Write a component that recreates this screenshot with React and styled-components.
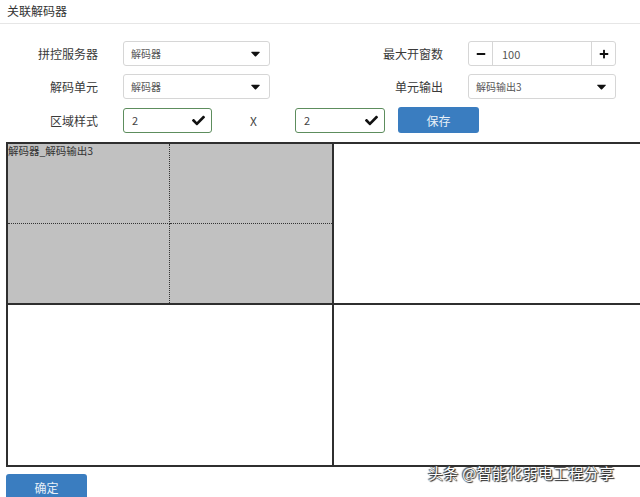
import React from 'react'
import styled, { createGlobalStyle } from 'styled-components'
import { FaCaretDown, FaCheck, FaMinus, FaPlus } from 'react-icons/fa'

const Global = createGlobalStyle`
  html, body {
    margin: 0;
    padding: 0;
    background: #fff;
    overflow: hidden;
  }
  body {
    font-family: "Noto Sans CJK SC", "Liberation Sans", sans-serif;
    color: #333;
  }
`

const Page = styled.div`
  position: relative;
  width: 640px;
  height: 497px;
  overflow: hidden;
`

const Header = styled.div`
  height: 24px;
  box-sizing: border-box;
  padding: 3px 0 0 7px;
  font-size: 12px;
  line-height: 16px;
  border-bottom: 1px solid #e6e6e6;
`

const Form = styled.div`
  display: grid;
  grid-template-columns: 98px 147px 148px 148px;
  grid-auto-rows: auto;
  column-gap: 25px;
  row-gap: 8px;
  padding-top: 17px;
`

const Label = styled.div`
  display: flex;
  align-items: center;
  justify-content: flex-end;
  font-size: 12px;
  color: #3a3a3a;
`

const Select = styled.div`
  height: 25px;
  box-sizing: border-box;
  border: 1px solid #d6d6d6;
  border-radius: 3px;
  display: flex;
  align-items: center;
  justify-content: space-between;
  padding: 0 6px 0 7px;
  font-size: 10px;
  color: #555;
  svg {
    font-size: 15px;
    color: #111;
  }
`

const Spinner = styled.div`
  height: 25px;
  box-sizing: border-box;
  border: 1px solid #d6d6d6;
  border-radius: 3px;
  display: flex;
  align-items: stretch;
  font-size: 11px;
  color: #555;
`

const SpinButton = styled.div`
  width: 23px;
  display: flex;
  align-items: center;
  justify-content: center;
  border-${p => (p.$side === 'left' ? 'right' : 'left')}: 1px solid #d6d6d6;
  svg {
    font-size: 10px;
    color: #111;
  }
`

const SpinValue = styled.div`
  flex: 1;
  display: flex;
  align-items: center;
  padding-left: 9px;
`

const StyleRow = styled.div`
  grid-column: 2 / 5;
  display: flex;
  align-items: center;
`

const CheckInput = styled.div`
  width: ${p => p.$w}px;
  height: 25px;
  box-sizing: border-box;
  border: 1px solid #5d8d5d;
  border-radius: 3px;
  display: flex;
  align-items: center;
  justify-content: space-between;
  padding: 0 6px 0 8px;
  font-size: 11px;
  color: #444;
  svg {
    font-size: 13px;
    color: #111;
  }
`

const Times = styled.div`
  width: 83px;
  text-align: center;
  font-size: 12px;
  color: #444;
`

const Button = styled.div`
  width: 81px;
  height: 26px;
  border-radius: 3px;
  background: #3a7dc0;
  color: #e8f0f8;
  font-size: 12px;
  display: flex;
  align-items: center;
  justify-content: center;
  margin-left: ${p => p.$ml || 0}px;
`

const Wall = styled.div`
  margin: 9px 0 0 6px;
  width: 660px;
  box-sizing: border-box;
  padding: 2px 0 2px 2px;
  background: #2f2f2f;
  display: grid;
  grid-template-columns: 324px 1fr;
  grid-template-rows: 159px 160px;
  gap: 2px;
`

const Cell = styled.div`
  position: relative;
  background: ${p => (p.$active ? '#c1c1c1' : '#fff')};
  ${p =>
    p.$active &&
    `
    display: grid;
    grid-template-columns: 1fr 1fr;
    grid-template-rows: 1fr 1fr;
  `}
`

const SubWindow = styled.div`
  border-right: ${p => (p.$col === 0 ? '1px dotted #333' : 'none')};
  border-bottom: ${p => (p.$row === 0 ? '1px dotted #333' : 'none')};
`

const CellName = styled.div`
  position: absolute;
  left: 0;
  top: 1px;
  font-size: 10.5px;
  line-height: 12px;
  color: #333;
`

const Footer = styled.div`
  padding: 7px 0 0 6px;
`

const Watermark = styled.div`
  position: absolute;
  left: 428px;
  top: 463px;
  font-size: 15px;
  line-height: 20px;
  color: #fff;
  letter-spacing: 0.3px;
  text-shadow: 0 0 1px #222, 1px 1px 1px #222, -1px -1px 1px #444;
`

export default function App() {
  return (
    <Page>
      <Global />
      <Header>关联解码器</Header>
      <Form>
        <Label>拼控服务器</Label>
        <Select>
          解码器
          <FaCaretDown />
        </Select>
        <Label>最大开窗数</Label>
        <Spinner>
          <SpinButton $side="left">
            <FaMinus />
          </SpinButton>
          <SpinValue>100</SpinValue>
          <SpinButton $side="right">
            <FaPlus />
          </SpinButton>
        </Spinner>

        <Label>解码单元</Label>
        <Select>
          解码器
          <FaCaretDown />
        </Select>
        <Label>单元输出</Label>
        <Select>
          解码输出3
          <FaCaretDown />
        </Select>

        <Label>区域样式</Label>
        <StyleRow>
          <CheckInput $w={89}>
            2
            <FaCheck />
          </CheckInput>
          <Times>X</Times>
          <CheckInput $w={90}>
            2
            <FaCheck />
          </CheckInput>
          <Button $ml={13}>保存</Button>
        </StyleRow>
      </Form>
      <Wall>
        <Cell $active>
          {[0, 1].map(row =>
            [0, 1].map(col => <SubWindow key={`${row}-${col}`} $row={row} $col={col} />)
          )}
          <CellName>解码器_解码输出3</CellName>
        </Cell>
        <Cell />
        <Cell />
        <Cell />
      </Wall>
      <Footer>
        <Button>确定</Button>
      </Footer>
      <Watermark>头条 @智能化弱电工程分享</Watermark>
    </Page>
  )
}
